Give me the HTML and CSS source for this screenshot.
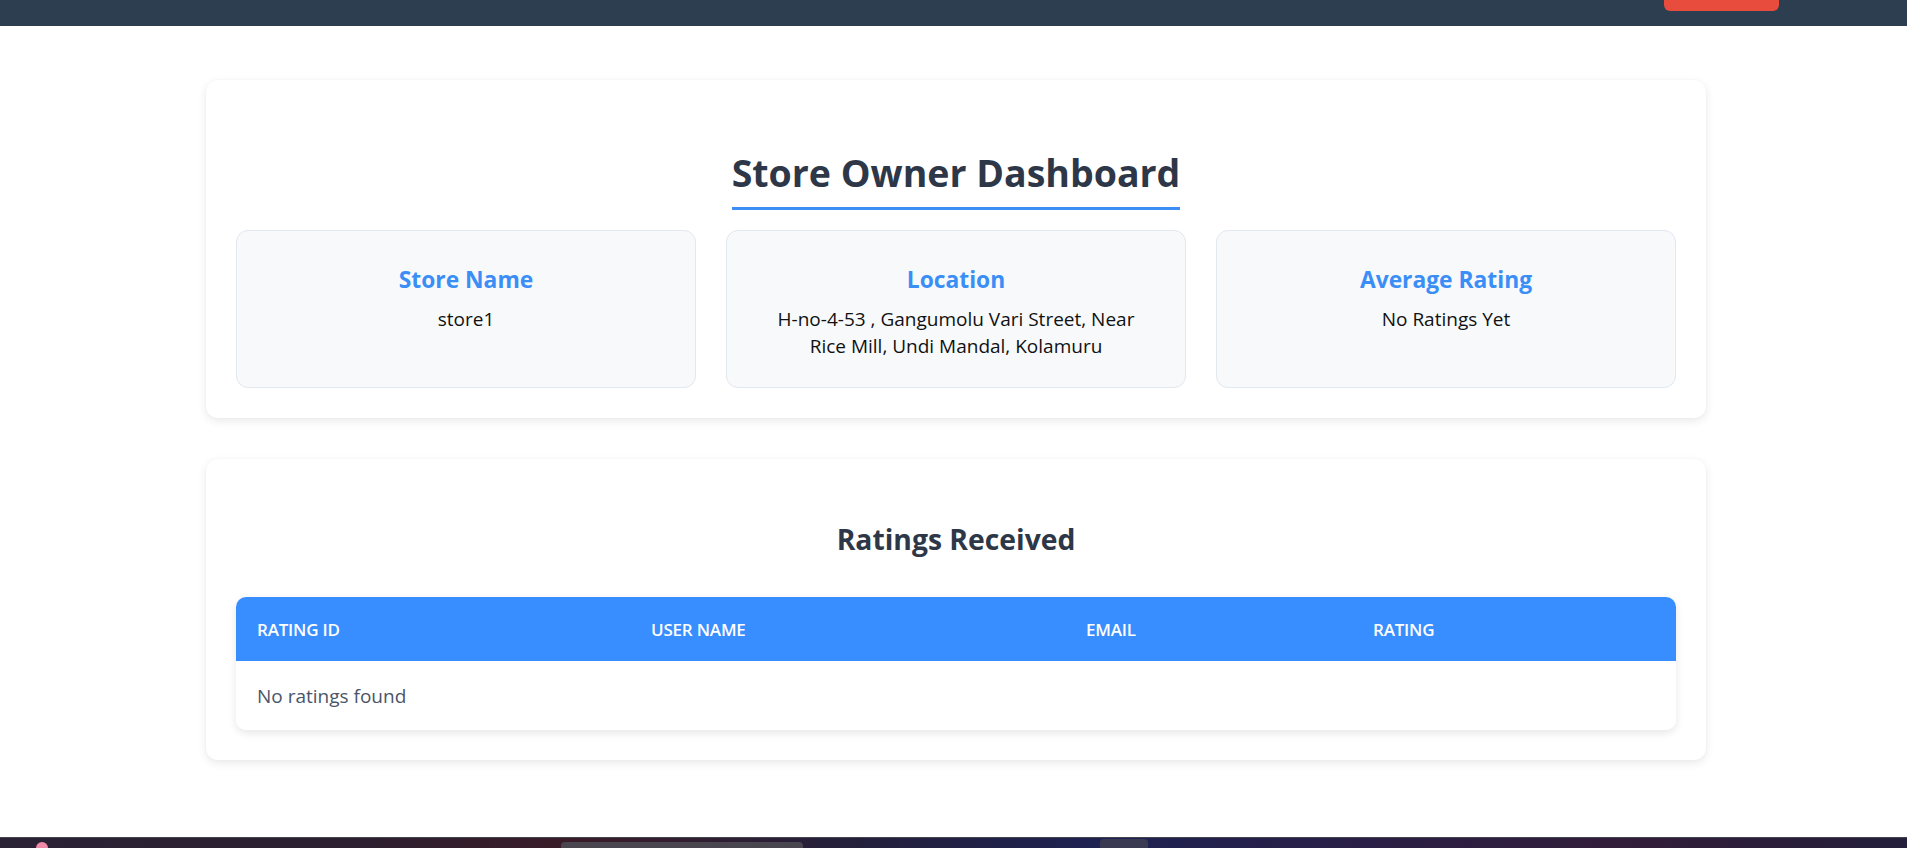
FILE: index.html
```html
<!DOCTYPE html>
<html lang="en">
<head>
<meta charset="utf-8">
<title>Store Owner Dashboard</title>
<link rel="stylesheet" href="styles.css">
</head>
<body>
<nav class="navbar">
  <button class="logout-btn" type="button" aria-label="Logout"></button>
</nav>
<main class="page">
  <div class="container">
    <section class="card card-summary">
      <div class="title-wrap">
        <h2 class="page-title">Store Owner Dashboard</h2>
      </div>
      <div class="stats">
        <div class="stat">
          <h3 class="stat-label">Store Name</h3>
          <p class="stat-value">store1</p>
        </div>
        <div class="stat">
          <h3 class="stat-label">Location</h3>
          <p class="stat-value">H-no-4-53 , Gangumolu Vari Street, Near<br>Rice Mill, Undi Mandal, Kolamuru</p>
        </div>
        <div class="stat">
          <h3 class="stat-label">Average Rating</h3>
          <p class="stat-value">No Ratings Yet</p>
        </div>
      </div>
    </section>
    <section class="card card-ratings">
      <h3 class="section-title">Ratings Received</h3>
      <div class="table-wrap">
        <table class="ratings-table">
          <colgroup>
            <col class="col-id">
            <col class="col-user">
            <col class="col-email">
            <col class="col-rating">
          </colgroup>
          <thead>
            <tr>
              <th>Rating ID</th>
              <th>User Name</th>
              <th>Email</th>
              <th>Rating</th>
            </tr>
          </thead>
          <tbody>
            <tr>
              <td colspan="4" class="empty">No ratings found</td>
            </tr>
          </tbody>
        </table>
      </div>
    </section>
  </div>
</main>
<div class="taskbar">
  <span class="tb-icon"></span>
  <span class="tb-search"></span>
  <span class="tb-app"></span>
</div>
</body>
</html>
```

FILE: styles.css
```css
* { box-sizing: border-box; }

html, body {
  margin: 0;
  padding: 0;
  background: #ffffff;
}

body {
  font-family: "Open Sans", "Noto Sans", "Liberation Sans", sans-serif;
  color: #1a1a1a;
}

.navbar {
  height: 26px;
  background: #2c3e50;
  display: flex;
  justify-content: flex-end;
  align-items: flex-start;
  padding-right: 128px;
}

.logout-btn {
  width: 115px;
  height: 11px;
  border: 0;
  padding: 0;
  background: #e74c3c;
  border-radius: 0 0 6px 6px;
}

.page {
  padding: 54px 0 60px 5px;
}

.container {
  width: 1500px;
  margin: 0 auto;
}

.card {
  background: #ffffff;
  border-radius: 12px;
  box-shadow: 0 3px 10px rgba(0, 0, 0, 0.09), 0 0 2px rgba(0, 0, 0, 0.03);
  padding: 30px;
}

.card-summary {
  margin-bottom: 41px;
}

.title-wrap {
  text-align: center;
}

.page-title {
  display: inline-block;
  margin: 39px 0 20px;
  padding-bottom: 10px;
  border-bottom: 3px solid #3a8ef6;
  font-size: 37.5px;
  line-height: 48px;
  font-weight: 700;
  color: #2d3748;
}

.stats {
  display: grid;
  grid-template-columns: repeat(3, 1fr);
  gap: 30px;
}

.stat {
  background: #f7f9fb;
  border: 1px solid #e2e8f0;
  border-radius: 12px;
  padding: 33px 30px 27px;
  text-align: center;
}

.stat-label {
  margin: 0 0 10px;
  font-size: 22.8px;
  line-height: 32px;
  font-weight: 700;
  color: #3a8ef6;
}

.stat-value {
  margin: 0;
  font-size: 19px;
  line-height: 27px;
  color: #111111;
}

.section-title {
  margin: 30px 0 38px;
  text-align: center;
  font-size: 28.3px;
  line-height: 40px;
  font-weight: 700;
  color: #2d3748;
}

.table-wrap {
  border-radius: 10px;
  overflow: hidden;
  box-shadow: 0 3px 8px rgba(0, 0, 0, 0.1);
}

.ratings-table {
  width: 100%;
  border-collapse: collapse;
  table-layout: fixed;
}

.col-id { width: 394px; }
.col-user { width: 435px; }
.col-email { width: 287px; }
.col-rating { width: 324px; }

.ratings-table th {
  background: #388dff;
  color: #ffffff;
  text-align: left;
  text-transform: uppercase;
  font-size: 17px;
  line-height: 23px;
  font-weight: 600;
  padding: 21px 21px 20px;
  letter-spacing: -0.2px;
}

.ratings-table td {
  padding: 22px 21px 20px;
  font-size: 19px;
  line-height: 27px;
  color: #4a5568;
  background: #ffffff;
}

.taskbar {
  position: fixed;
  left: 0;
  right: 0;
  bottom: 0;
  height: 11px;
  border-top: 1px solid #44444f;
  background: linear-gradient(90deg, #2a2335 0%, #2b1f30 18%, #3a1c28 30%, #24203c 45%, #1e2252 58%, #2a1f45 72%, #321d3a 85%, #241f3a 100%);
  display: flex;
  align-items: flex-start;
}

.tb-icon {
  width: 12px;
  height: 12px;
  margin: 4px 0 0 36px;
  border-radius: 50%;
  background: #f08aa8;
}

.tb-search {
  width: 242px;
  height: 10px;
  margin: 4px 0 0 513px;
  border-radius: 4px 4px 0 0;
  background: #4a4650;
}

.tb-app {
  width: 48px;
  height: 10px;
  margin: 1px 0 0 297px;
  border-radius: 4px 4px 0 0;
  background: #3a3a52;
}
```
